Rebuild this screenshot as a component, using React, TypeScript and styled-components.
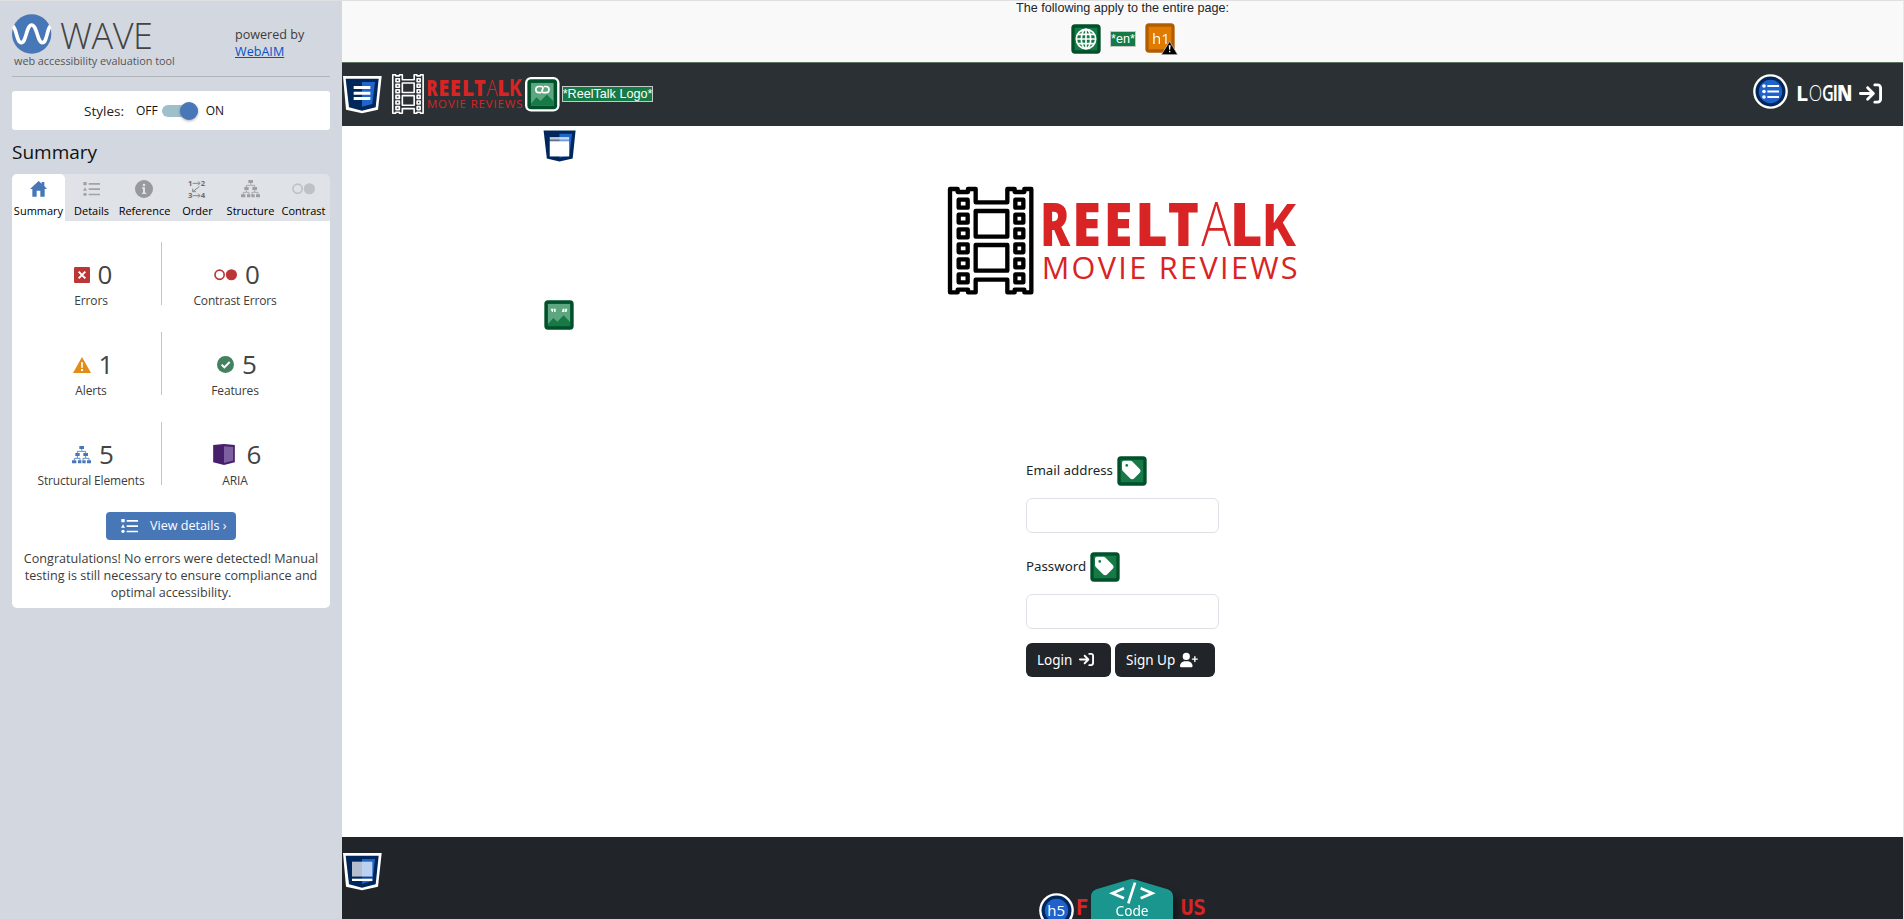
import React from "react";
import styled, { createGlobalStyle } from "styled-components";
import { FaArrowRightToBracket, FaTag, FaUserPlus } from "react-icons/fa6";

const GlobalStyle = createGlobalStyle`
  *, *::before, *::after { box-sizing: border-box; }
  html, body { margin: 0; padding: 0; overflow: hidden; }
  svg { display: block; flex: none; overflow: visible; }
`;

const Shell = styled.div`
  display: flex;
  width: 100%;
  height: 919px;
  overflow: hidden;
  border-top: 1px solid #e0e0e0;
  border-right: 1px solid #e8e8e8;
  background: #fff;
`;

/* ---------- sidebar ---------- */

const Sidebar = styled.aside`
  width: 342px;
  flex: none;
  padding: 0 12px;
  background: #d3d8e0;
  font-family: "Open Sans", sans-serif;
  font-size: 12.6px;
  color: #3c3c3c;
`;

const SideHeader = styled.header`
  display: flex;
  justify-content: space-between;
  height: 76px;
  padding-top: 13px;
  border-bottom: 1px solid #aeb4b8;
`;

const Brand = styled.div`
  display: flex;
  flex-direction: column;
`;

const BrandRow = styled.div`
  display: flex;
  align-items: center;
  gap: 8px;
  height: 40px;
`;

const BrandName = styled.span`
  font-weight: 300;
  font-size: 36px;
  line-height: 36px;
  letter-spacing: -0.5px;
  color: #444;
  padding-top: 4px;
`;

const Tagline = styled.span`
  padding-left: 2px;
  font-size: 10.9px;
  line-height: 14px;
  letter-spacing: -0.05px;
  white-space: nowrap;
  color: #555;
`;

const Powered = styled.p`
  width: 95px;
  margin: 12px 0 0;
  line-height: 17px;
  a { color: #0550c8; }
`;

const StylesBox = styled.div`
  display: flex;
  align-items: center;
  height: 39px;
  margin-top: 14px;
  padding-left: 72px;
  border-radius: 3px;
  background: #fff;
  font-size: 12px;
  color: #111;
`;

const StylesLabel = styled.span`
  width: 52px;
  font-size: 13.5px;
  color: #222;
`;

const SwitchTrack = styled.span`
  display: flex;
  justify-content: flex-end;
  align-items: center;
  width: 36px;
  height: 12px;
  margin: 1px 8px 0 4px;
  border-radius: 6px;
  background: #9fc0cb;
`;

const SwitchKnob = styled.span`
  width: 18px;
  height: 18px;
  border-radius: 50%;
  background: #4877b7;
  box-shadow: 0 1px 3px rgba(0, 0, 0, 0.35);
`;

const PanelTitle = styled.h1`
  margin: 9px 0 8px;
  font-size: 19px;
  font-weight: 400;
  line-height: 27px;
  color: #111;
`;

const Tabs = styled.nav`
  display: flex;
  height: 47px;
  border-radius: 5px 5px 0 0;
  background: #dfe2e7;
`;

const Tab = styled.div<{ $active?: boolean }>`
  display: flex;
  flex-direction: column;
  align-items: center;
  flex: 1 1 0;
  min-width: 0;
  border-radius: 5px 5px 0 0;
  background: ${(p) => (p.$active ? "#fff" : "transparent")};
  color: ${(p) => (p.$active ? "#4877b7" : "#9a9c9f")};
`;

const TabIcon = styled.span`
  display: flex;
  align-items: center;
  justify-content: center;
  height: 30px;
  padding-right: 1px;
`;

const TabText = styled.span`
  font-size: 11px;
  line-height: 14px;
  color: #000;
`;

const Panel = styled.section`
  display: flex;
  flex-direction: column;
  align-items: center;
  height: 387px;
  border-radius: 0 0 5px 5px;
  background: #fff;
`;

const Stats = styled.div`
  display: grid;
  grid-template-columns: 141px 146px;
  grid-auto-rows: 63px;
  row-gap: 27px;
  width: 100%;
  padding: 21px 0 0 9px;
`;

const Stat = styled.div<{ $divided?: boolean }>`
  display: flex;
  flex-direction: column;
  align-items: center;
  padding-top: 17px;
  border-right: ${(p) => (p.$divided ? "1px solid #c4c4c4" : "none")};
`;

const StatTop = styled.div`
  display: flex;
  align-items: center;
  height: 32px;
  padding-left: 4px;
`;

const Count = styled.span<{ $gap?: number }>`
  margin-left: ${(p) => p.$gap ?? 8}px;
  font-size: 26px;
  line-height: 31px;
  color: #444;
`;

const StatLabel = styled.span`
  font-size: 12px;
  line-height: 18px;
  margin-top: 2px;
  letter-spacing: -0.15px;
  white-space: nowrap;
`;

const DetailsButton = styled.button`
  display: flex;
  align-items: center;
  gap: 12px;
  width: 130px;
  height: 28px;
  margin-top: 27px;
  padding: 0 0 1px 15px;
  border: 0;
  border-radius: 4px;
  background: #4877b7;
  color: #fff;
  font: 12.6px "Open Sans", sans-serif;
  white-space: nowrap;
`;

const Message = styled.p`
  width: 306px;
  margin: 10px 0 0;
  line-height: 17px;
  text-align: center;
`;

/* ---------- evaluated page ---------- */

const Page = styled.div`
  display: flex;
  flex-direction: column;
  flex: 1;
  min-width: 0;
  font-family: "Noto Sans", sans-serif;
`;

const PageNotice = styled.div`
  display: flex;
  flex-direction: column;
  align-items: center;
  height: 62px;
  border-bottom: 1px solid #5f7263;
  background: #f9f9f9;
  color: #212529;
  font: 12.6px/14px "Liberation Sans", Arial, sans-serif;
`;

const NoticeText = styled.span`
  height: 22px;
`;

const NoticeIcons = styled.div`
  display: flex;
  align-items: center;
  gap: 9px;
  padding-left: 4px;
`;

const GlyphTile = styled.span`
  display: flex;
  filter: drop-shadow(0 0 2px #fff);
`;

const AltText = styled.span`
  display: inline-block;
  border: 1px solid #c3c9c5;
  background: #167a47;
  color: #fff;
  font: 12.6px/14px "Liberation Sans", Arial, sans-serif;
  white-space: nowrap;
`;

const NavBar = styled.header`
  display: flex;
  align-items: center;
  height: 63px;
  flex: none;
  padding: 0 21px 0 1px;
  background: #2b3035;
`;

const NavLogo = styled.a`
  display: flex;
  align-items: center;
  gap: 2.5px;
  margin-left: 10px;
`;

const NavLogin = styled.a`
  display: flex;
  align-items: center;
  gap: 10px;
  margin-left: auto;
  padding-bottom: 6px;
  color: #fff;
`;

const LoginText = styled.span`
  display: flex;
  align-items: center;
  gap: 8px;
  padding-top: 4px;
`;

const Main = styled.main`
  position: relative;
  display: flex;
  flex-direction: column;
  align-items: center;
  height: 711px;
  flex: none;
  padding-top: 61px;
  background: #fff;
`;

const Marker = styled.span<{ $x: number; $y: number }>`
  position: absolute;
  left: ${(p) => p.$x}px;
  top: ${(p) => p.$y}px;
`;

const Form = styled.form`
  width: 193px;
  margin-top: 162px;
`;

const FieldLabel = styled.label`
  display: flex;
  align-items: center;
  gap: 4px;
  height: 29px;
  font-size: 13.3px;
  color: #212529;
  white-space: nowrap;
`;

const FieldName = styled.span`
  margin-top: -2px;
`;

const Field = styled.input`
  display: block;
  width: 193px;
  height: 35px;
  margin: 12px 0 20px;
  border: 1px solid #dee2e6;
  border-radius: 6px;
  background: #fff;
`;

const ButtonRow = styled.div`
  display: flex;
  gap: 4px;
  margin-top: -6px;
`;

const DarkButton = styled.button<{ $width: number; $gap: number }>`
  display: flex;
  align-items: center;
  gap: ${(p) => p.$gap}px;
  width: ${(p) => p.$width}px;
  height: 34px;
  padding: 0 0 0 11px;
  border: 0;
  border-radius: 6px;
  background: #212529;
  color: #fff;
  font: 13.5px "Noto Sans", sans-serif;
  white-space: nowrap;
`;

const Footer = styled.footer`
  flex: 1;
  min-height: 0;
  overflow: hidden;
  display: flex;
  align-items: flex-start;
  background: #212529;
  padding: 16px 0 0 1px;
`;

const FollowRow = styled.div`
  display: flex;
  margin: 26px 0 0 657px;
  color: #d82424;
  font: 700 21px/20px "DejaVu Sans Mono", monospace;
`;

const FollowWord = styled.span<{ $before: number }>`
  width: 13px;
  margin: 19px 0 0 ${(p) => p.$before}px;
`;

const CodeBadge = styled.span`
  display: flex;
  height: 60px;
  width: 82px;
  margin-left: 2px;
  filter: drop-shadow(5px 6px 4px rgba(0, 0, 0, 0.4));
`;

const HeadingBadge = styled.span`
  display: flex;
  margin-top: 14px;
  font-weight: 400;
`;

/* ---------- drawings ---------- */

type Letter = { ch: string; x: number; sx: number; weight: number };

const LOGO_LETTERS: Letter[] = [
  { ch: "R", x: 332, sx: 0.73, weight: 800 },
  { ch: "E", x: 428, sx: 0.87, weight: 800 },
  { ch: "E", x: 522, sx: 0.87, weight: 800 },
  { ch: "L", x: 617, sx: 0.93, weight: 800 },
  { ch: "T", x: 714, sx: 0.88, weight: 800 },
  { ch: "A", x: 815, sx: 0.83, weight: 300 },
  { ch: "L", x: 901, sx: 0.93, weight: 800 },
  { ch: "K", x: 994, sx: 0.88, weight: 700 },
];

const LOGIN_LETTERS: Letter[] = [
  { ch: "L", x: -6, sx: 0.98, weight: 700 },
  { ch: "O", x: 32, sx: 0.8, weight: 300 },
  { ch: "G", x: 72, sx: 0.74, weight: 600 },
  { ch: "I", x: 103, sx: 0.9, weight: 600 },
  { ch: "N", x: 117, sx: 0.84, weight: 800 },
];

const Lettering = ({ letters, y, size }: { letters: Letter[]; y: number; size: number }) => (
  <g fontFamily="Open Sans, sans-serif" fontSize={size}>
    {letters.map((l, i) => (
      <text key={i} fontWeight={l.weight} transform={`translate(${l.x} ${y}) scale(${l.sx} 1)`}>
        {l.ch}
      </text>
    ))}
  </g>
);

const HOLES = [102, 147, 191, 236, 281, 326];

const ReelTalkLogo = ({ width, film }: { width: number; film: string }) => (
  <svg width={width} height={(width * 323) / 1049} viewBox="55 52 1049 323">
    <g fill="none" stroke={film} strokeWidth="13" strokeLinejoin="round">
      <path d="M61 58H84V67H115V58H138V98H233V58H255V67H284V58H305V368H284V360H255V368H233V330H138V368H115V360H84V368H61Z" />
      <rect x="138" y="124" width="95" height="77" />
      <rect x="138" y="226" width="95" height="77" />
      {HOLES.map((y) => (
        <React.Fragment key={y}>
          <rect x="87" y={y - 12} width="27" height="24" />
          <rect x="257" y={y - 12} width="24" height="24" />
        </React.Fragment>
      ))}
    </g>
    <g fill="#d82424">
      <Lettering letters={LOGO_LETTERS} y={228} size={180} />
      <text x="336" y="328" fontFamily="Open Sans, sans-serif" fontSize="92" textLength="768" lengthAdjust="spacing">
        MOVIE REVIEWS
      </text>
    </g>
  </svg>
);

const Shield = ({ kind, size = 38.7 }: { kind: "nav" | "main" | "footer"; size?: number }) => (
  <svg width={size} height={(size * 112) / 116} viewBox="0 0 116 112">
    <path d="M0 0H116L105 101L57 112L9 101Z" fill="#fff" />
    <path d="M8 8H107L98 94L57 104L18 94Z" fill="#00275b" />
    <path d="M57 18H96L88 84L57 92Z" fill="#1f66cb" />
    {kind === "nav" && <path d="M32 30H82V39H32ZM32 47H82V56H32ZM32 63H82V72H32Z" fill="#fff" />}
    {kind === "main" && (
      <>
        <path d="M27 28H87V36H27Z" fill="#fff" opacity=".75" />
        <path d="M27 36H87V42H27Z" fill="#fff" opacity=".35" />
        <path d="M27 41H87V88H27Z" fill="#fff" />
      </>
    )}
    {kind === "footer" && (
      <>
        <path d="M27 26H88V71H27Z" fill="#fff" opacity=".7" />
        <path d="M27 71H88V77H27Z" fill="#00275b" opacity=".6" />
        <path d="M27 77H88V84H27Z" fill="#fff" />
      </>
    )}
  </svg>
);

const Tile = ({ children, size = 30, outlined }: { children: React.ReactNode; size?: number; outlined?: boolean }) => (
  <svg width={size} height={size} viewBox={outlined ? "-6 -6 102 102" : "0 0 90 90"}>
    {outlined && <rect x="-6" y="-6" width="102" height="102" rx="18" fill="#fff" />}
    <rect x="1" y="1" width="88" height="88" rx="11" fill="#00502a" />
    <rect x="11" y="11" width="68" height="68" rx="2" fill="#167a47" />
    {children}
  </svg>
);

const PictureTile = ({ linked }: { linked?: boolean }) => (
  <Tile size={linked ? 34.5 : 30} outlined={linked}>
    <rect x="12" y="12" width="66" height="66" fill="#5da780" />
    <path d="M12 72L28 54L40 65L59 46L78 66V78H12Z" fill="#167a47" />
    {linked ? (
      <g fill="none" stroke="#fff" strokeWidth="5" strokeLinecap="round">
        <path d="M40 40H35A9 9 0 0 1 35 22H42Q50 23 46 31Q41 40 49 40H56A9 9 0 0 0 56 22H52" />
      </g>
    ) : (
      <path d="M20 26H27V36H24ZM28 26H35V36H31ZM56 26H62L60 36H54ZM64 26H70L68 36H61Z" fill="#fff" />
    )}
  </Tile>
);

const GlobeTile = () => (
  <Tile>
    <g fill="none" stroke="#fff" strokeWidth="5">
      <circle cx="45" cy="45" r="29" />
      <ellipse cx="45" cy="45" rx="14" ry="29" />
      <path d="M45 16V74M16 45H74M20 31H70M20 59H70" />
    </g>
  </Tile>
);

const TagTile = () => (
  <Tile>
    <FaTag x={11} y={10} width={65} height={65} size={65} color="#fff" />
  </Tile>
);

const H1Tile = () => (
  <svg width="33" height="32" viewBox="0 0 99 96">
    <rect x="1" y="1" width="88" height="88" rx="11" fill="#b25c00" />
    <rect x="11" y="11" width="68" height="68" rx="2" fill="#e07b00" />
    <text x="21" y="62" fontFamily="Open Sans, sans-serif" fontSize="45" fill="#fff">h1</text>
    <path d="M74 55L98 95H49Z" fill="#000" stroke="#ddd" strokeWidth="2" />
    <path d="M71 67H77L75.500 80H72.500ZM72 83H76V88H72Z" fill="#fff" />
  </svg>
);

const RoundBadge = ({ children }: { children: React.ReactNode }) => (
  <svg width="35" height="35" viewBox="0 0 105 105">
    <circle cx="52.500" cy="52.500" r="52" fill="#fff" />
    <circle cx="52.500" cy="52.500" r="45" fill="#00275b" />
    <circle cx="52.500" cy="52.500" r="35" fill="#1f62cb" />
    {children}
  </svg>
);

const ListIcon = ({ color, width = 17 }: { color: string; width?: number }) => (
  <svg width={width} height={(width * 14) / 17} viewBox="0 0 51 42" fill={color}>
    <path d="M1 0H11V10H1ZM6 16L12 26H0ZM17 3H51V8H17ZM17 19H51V24H17ZM17 35H51V40H17Z" />
    <circle cx="6" cy="37" r="5" />
  </svg>
);

const TreeIcon = ({ color, size = 19 }: { color: string; size?: number }) => (
  <svg width={size} height={(size * 52) / 57} viewBox="0 0 57 52">
    <path d="M29 8V14M16 22V16H41V22M16 30V36M41 30V36M7 43V37H24V43M33 43V37H51V43" fill="none" stroke={color} strokeWidth="2.500" />
    <path d="M22 0H36V9H22ZM10 21H23V30H10ZM34 21H48V30H34ZM0 43H13V52H0ZM18 43H28V52H18ZM31 43H41V52H31ZM45 43H57V52H45Z" fill={color} />
  </svg>
);

const DotsIcon = ({ color, width = 23 }: { color: string; width?: number }) => (
  <svg width={width} height={width / 2} viewBox="0 0 70 35">
    <circle cx="17" cy="17.500" r="14" fill="none" stroke={color} strokeWidth="5" />
    <circle cx="53" cy="17.500" r="17" fill={color} />
  </svg>
);

const OrderIcon = () => (
  <svg width="18" height="19" viewBox="0 0 54 57" fontFamily="Open Sans, sans-serif" fontWeight="700" fontSize="23" fill="#6c6e70">
    <text x="0" y="18">1</text>
    <text x="38" y="18">2</text>
    <text x="0" y="55">3</text>
    <text x="38" y="55">4</text>
    <path d="M14 10H36M30 4L36 10L30 16M14 47H36M30 41L36 47L30 53M34 20L14 35M14 26V35H24" fill="none" stroke="#85878a" strokeWidth="3" />
  </svg>
);

const WaveMark = () => (
  <svg width="40" height="40" viewBox="0 0 120 120">
    <circle cx="59" cy="60" r="59" fill="#4877b7" />
    <path d="M3 37C14 44 14 86 28 86C43 86 43 33 59 33C75 33 76 86 91 86C105 86 105 44 115 37" fill="none" stroke="#fff" strokeWidth="11" />
  </svg>
);

export default function App() {
  return (
    <Shell>
      <GlobalStyle />
      <Sidebar>
        <SideHeader>
          <Brand>
            <BrandRow>
              <WaveMark />
              <BrandName>WAVE</BrandName>
            </BrandRow>
            <Tagline>web accessibility evaluation tool</Tagline>
          </Brand>
          <Powered>
            powered by
            <br />
            <a href="#webaim">WebAIM</a>
          </Powered>
        </SideHeader>

        <StylesBox>
          <StylesLabel>Styles:</StylesLabel>
          OFF
          <SwitchTrack>
            <SwitchKnob />
          </SwitchTrack>
          ON
        </StylesBox>

        <PanelTitle>Summary</PanelTitle>

        <Tabs>
          <Tab $active>
            <TabIcon>
              <svg width="17" height="16" viewBox="0 0 51 48" fill="currentColor">
                <path d="M26 0L35 8V3H43V15L51 24H44V47H31V29H20V47H7V24H0Z" />
              </svg>
            </TabIcon>
            <TabText>Summary</TabText>
          </Tab>
          <Tab>
            <TabIcon><ListIcon color="#a1a3a6" /></TabIcon>
            <TabText>Details</TabText>
          </Tab>
          <Tab>
            <TabIcon>
              <svg width="18" height="18" viewBox="0 0 54 54">
                <circle cx="27" cy="27" r="27" fill="#97999c" />
                <circle cx="27" cy="15" r="4" fill="#dfe2e7" />
                <path d="M21 22H30V38H34V42H21V38H24V26H21Z" fill="#dfe2e7" />
              </svg>
            </TabIcon>
            <TabText>Reference</TabText>
          </Tab>
          <Tab>
            <TabIcon><OrderIcon /></TabIcon>
            <TabText>Order</TabText>
          </Tab>
          <Tab>
            <TabIcon><TreeIcon color="#9c9ea1" /></TabIcon>
            <TabText>Structure</TabText>
          </Tab>
          <Tab>
            <TabIcon><DotsIcon color="#bec1c5" /></TabIcon>
            <TabText>Contrast</TabText>
          </Tab>
        </Tabs>

        <Panel>
          <Stats>
            <Stat $divided>
              <StatTop>
                <svg width="16" height="16" viewBox="0 0 48 48">
                  <rect width="48" height="48" rx="4" fill="#bb3636" />
                  <path d="M14 14L34 34M34 14L14 34" stroke="#fff" strokeWidth="6" />
                </svg>
                <Count>0</Count>
              </StatTop>
              <StatLabel>Errors</StatLabel>
            </Stat>
            <Stat>
              <StatTop>
                <DotsIcon color="#bb3636" />
                <Count>0</Count>
              </StatTop>
              <StatLabel>Contrast Errors</StatLabel>
            </Stat>
            <Stat $divided>
              <StatTop>
                <svg width="18" height="16" viewBox="0 0 54 48">
                  <path d="M27 0L54 48H0Z" fill="#e38c17" />
                  <path d="M24 16H30L29 33H25ZM24 36H30V42H24Z" fill="#fff" />
                </svg>
                <Count>1</Count>
              </StatTop>
              <StatLabel>Alerts</StatLabel>
            </Stat>
            <Stat>
              <StatTop>
                <svg width="17" height="17" viewBox="0 0 51 51">
                  <circle cx="25.500" cy="25.500" r="25.500" fill="#44815f" />
                  <path d="M14 26L22 34L38 18" fill="none" stroke="#fff" strokeWidth="6" />
                </svg>
                <Count>5</Count>
              </StatTop>
              <StatLabel>Features</StatLabel>
            </Stat>
            <Stat $divided>
              <StatTop>
                <TreeIcon color="#4877b7" />
                <Count>5</Count>
              </StatTop>
              <StatLabel>Structural Elements</StatLabel>
            </Stat>
            <Stat>
              <StatTop>
                <svg width="22" height="21" viewBox="0 0 64 62">
                  <path d="M0 3L32 0L64 3V54L32 62L0 54Z" fill="#46206b" />
                  <path d="M32 7L59 9V49L32 56Z" fill="#7e5fa0" />
                </svg>
                <Count $gap={12}>6</Count>
              </StatTop>
              <StatLabel>ARIA</StatLabel>
            </Stat>
          </Stats>
          <DetailsButton type="button">
            <ListIcon color="#fff" />
            View details ›
          </DetailsButton>
          <Message>
            Congratulations! No errors were detected! Manual testing is still necessary to ensure
            compliance and optimal accessibility.
          </Message>
        </Panel>
      </Sidebar>

      <Page>
        <PageNotice>
          <NoticeText>The following apply to the entire page:</NoticeText>
          <NoticeIcons>
            <GlyphTile><GlobeTile /></GlyphTile>
            <AltText>*en*</AltText>
            <GlyphTile><H1Tile /></GlyphTile>
          </NoticeIcons>
        </PageNotice>

        <NavBar>
          <Shield kind="nav" />
          <NavLogo>
            <ReelTalkLogo width={130.500} film="#fff" />
            <PictureTile linked />
            <AltText>*ReelTalk Logo*</AltText>
          </NavLogo>
          <NavLogin>
            <RoundBadge>
              <g fill="#fff">
                <circle cx="33" cy="36" r="5.500" />
                <circle cx="33" cy="52.500" r="5.500" />
                <circle cx="33" cy="69" r="5.500" />
                <path d="M43 33H78V39H43ZM43 49.500H78V55.500H43ZM43 66H78V72H43Z" />
              </g>
            </RoundBadge>
            <LoginText>
              <svg width="53" height="20" viewBox="0 0 159 60" fill="#fff">
                <Lettering letters={LOGIN_LETTERS} y={52} size={66} />
              </svg>
              <FaArrowRightToBracket size={23} />
            </LoginText>
          </NavLogin>
        </NavBar>

        <Main>
          <Marker $x={199} $y={2}><Shield kind="main" size={37.500} /></Marker>
          <Marker $x={202} $y={174}><PictureTile /></Marker>
          <ReelTalkLogo width={349.700} film="#000" />
          <Form>
            <FieldLabel>
              <FieldName>Email address</FieldName>
              <TagTile />
            </FieldLabel>
            <Field type="email" />
            <FieldLabel>
              <FieldName>Password</FieldName>
              <TagTile />
            </FieldLabel>
            <Field type="password" />
            <ButtonRow>
              <DarkButton type="button" $width={85} $gap={7}>
                Login <FaArrowRightToBracket size={15} />
              </DarkButton>
              <DarkButton type="button" $width={100} $gap={5}>
                Sign Up <FaUserPlus size={18} />
              </DarkButton>
            </ButtonRow>
          </Form>
        </Main>

        <Footer>
          <Shield kind="footer" />
          <FollowRow>
            <HeadingBadge>
              <RoundBadge>
                <text x="25" y="68" fontFamily="Open Sans, sans-serif" fontSize="45" fill="#fff">h5</text>
              </RoundBadge>
            </HeadingBadge>
            <FollowWord $before={2}>F</FollowWord>
            <CodeBadge>
              <svg width="82" height="92" viewBox="0 0 246 276">
                <path d="M112 2Q123 -2 134 2L230 31Q246 37 246 52V224Q246 239 230 245L134 274Q123 278 112 274L16 245Q0 239 0 224V52Q0 37 16 31Z" fill="#1a968f" />
                <path d="M99 28L64 43L99 58M149 28L184 43L149 58M132 11L112 73" fill="none" stroke="#fff" strokeWidth="8" />
                <text x="123" y="111" textAnchor="middle" fontFamily="Noto Sans, sans-serif" fontWeight="400" fontSize="41" fill="#fff">Code</text>
              </svg>
            </CodeBadge>
            <FollowWord $before={8}>US</FollowWord>
          </FollowRow>
        </Footer>
      </Page>
    </Shell>
  );
}
